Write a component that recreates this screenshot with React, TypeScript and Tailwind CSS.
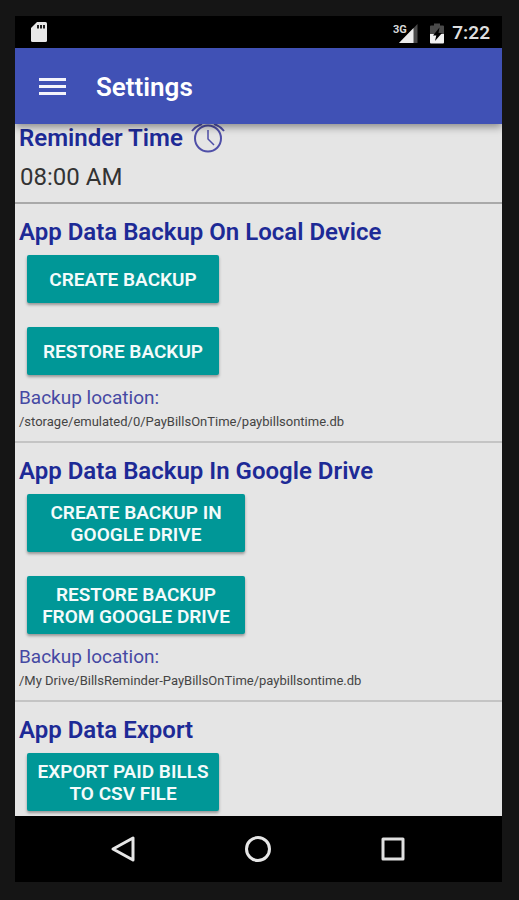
import type { ReactNode } from 'react';

interface BackupSectionProps {
  title: string;
  location?: string;
  children: ReactNode;
}

interface ActionButtonProps {
  wide?: boolean;
  children: ReactNode;
}

function SdCardIcon() {
  return (
    <svg viewBox="0 0 16 20" className="h-5 w-4" aria-hidden="true">
      <path d="M6 0h8.500q1.500 0 1.500 1.500v17q0 1.500-1.500 1.500h-13Q0 20 0 18.500V6z" fill="#e8e8e8" />
      <path d="M6 3h2v3.500H6zM9 3h2v3.500H9zM12 3h2v3.500h-2z" fill="#222" />
    </svg>
  );
}

function SignalIcon() {
  return (
    <svg viewBox="0 0 25 21" className="h-[21px] w-[25px]" role="img" aria-label="3G signal">
      <path d="M24.500 1v19H6z" fill="#4a4a4a" />
      <path d="M20.500 5v15H6z" fill="#ececec" />
      <text x="0" y="10" fontSize="11" fontWeight="700" fill="#d8d8d8" stroke="#000" strokeWidth="2" paintOrder="stroke">
        3G
      </text>
    </svg>
  );
}

function BatteryIcon() {
  return (
    <svg viewBox="0 0 14 21" className="h-[21px] w-3.5" aria-hidden="true">
      <path d="M4 .500h6v2h3q1 0 1 1V11H0V3.500q0-1 1-1h3z" fill="#4a4a4a" />
      <path d="M0 11h14v8.500q0 1-1 1H1q-1 0-1-1z" fill="#f2f2f2" />
      <path d="M9.500 4.500 3 12.500h3.300L5 18l7-8H8.500z" fill="#000" />
    </svg>
  );
}

function AlarmIcon() {
  return (
    <svg viewBox="0 0 34 34" className="-my-1 h-[34px] w-[34px]" fill="none" stroke="#4f4fa8" strokeWidth="2" aria-hidden="true">
      <circle cx="17" cy="17.500" r="13" />
      <path d="M17 9v9l6 6" strokeWidth="1.500" />
      <path d="M1 10Q5 5 11 3M33 10Q29 5 23 3" />
    </svg>
  );
}

function ActionButton({ wide = false, children }: ActionButtonProps) {
  return (
    <button
      type="button"
      className={`min-h-12 rounded-xs bg-[#009797] px-2 pt-2 pb-1.5 text-center text-[19px] leading-[22px] font-semibold text-[#f4fbfb] uppercase shadow-[0_2px_3px_rgba(0,0,0,0.35)] ${
        wide ? 'w-[218px]' : 'w-48'
      }`}
    >
      {children}
    </button>
  );
}

function BackupSection({ title, location, children }: BackupSectionProps) {
  return (
    <section className="border-b-2 border-[#c4c4c4] px-1 pt-3 pb-[9px] last:border-b-0">
      <h2 className="text-[24px] leading-8 font-semibold text-[#1d2a96]">{title}</h2>
      <div className="mt-[7px] flex flex-col items-start gap-6 pl-2">{children}</div>
      {location && (
        <>
          <h3 className="mt-[11px] text-[19px] leading-6 text-[#4549a3]">Backup location:</h3>
          <p className="mt-0.5 text-[13px] leading-5 text-[#444]">{location}</p>
        </>
      )}
    </section>
  );
}

export default function App() {
  return (
    <div className="h-screen bg-[#151515] pt-4 pr-[17px] pb-[18px] pl-[15px] font-['Roboto','Liberation_Sans',sans-serif]">
      <div className="flex h-full flex-col overflow-hidden bg-black">
        <div className="flex h-8 shrink-0 items-center justify-between pr-3 pl-4">
          <SdCardIcon />
          <div className="flex items-center pt-0.5 text-[#dedede]">
            <SignalIcon />
            <span className="ml-3">
              <BatteryIcon />
            </span>
            <span className="ml-2 text-[19px] leading-6 font-semibold">7:22</span>
          </div>
        </div>

        <header className="relative z-10 flex h-[76px] shrink-0 items-center bg-[#4051b5] pl-6 text-white shadow-[0_3px_8px_rgba(0,0,0,0.4)]">
          <button type="button" aria-label="Open menu" className="flex w-[27px] flex-col gap-1">
            <span className="h-[3px] w-full bg-[#f4f4fb]" />
            <span className="h-[3px] w-full bg-[#f4f4fb]" />
            <span className="h-[3px] w-full bg-[#f4f4fb]" />
          </button>
          <h1 className="ml-[30px] pt-0.5 text-[26px] leading-8 font-semibold">Settings</h1>
        </header>

        <main className="min-h-0 flex-1 overflow-hidden bg-[#e5e5e5]">
          <section className="border-b-2 border-[#a9a9a9] px-1 pb-[9px]">
            <h2 className="flex h-7 items-center gap-2 text-[24px] leading-7 font-semibold text-[#1d2a96]">
              Reminder Time
              <AlarmIcon />
            </h2>
            <p className="mt-[9px] pl-px text-[24px] leading-8 text-[#333]">08:00 AM</p>
          </section>

          <BackupSection title="App Data Backup On Local Device" location="/storage/emulated/0/PayBillsOnTime/paybillsontime.db">
            <ActionButton>Create Backup</ActionButton>
            <ActionButton>Restore Backup</ActionButton>
          </BackupSection>

          <BackupSection title="App Data Backup In Google Drive" location="/My Drive/BillsReminder-PayBillsOnTime/paybillsontime.db">
            <ActionButton wide>Create Backup in Google Drive</ActionButton>
            <ActionButton wide>Restore Backup from Google Drive</ActionButton>
          </BackupSection>

          <BackupSection title="App Data Export">
            <ActionButton>Export Paid Bills to CSV File</ActionButton>
          </BackupSection>
        </main>

        <nav className="flex h-[66px] shrink-0 items-center justify-center gap-[107px] pr-0.5">
          <button type="button" aria-label="Back">
            <svg viewBox="0 0 28 28" className="size-7" fill="none" stroke="#e6e6e6" strokeWidth="3" strokeLinejoin="round">
              <path d="M24 3v22L4 14z" />
            </svg>
          </button>
          <button type="button" aria-label="Home">
            <svg viewBox="0 0 28 28" className="size-7" fill="none" stroke="#e6e6e6" strokeWidth="3">
              <circle cx="14" cy="14" r="11.500" />
            </svg>
          </button>
          <button type="button" aria-label="Recent apps">
            <svg viewBox="0 0 28 28" className="size-7" fill="none" stroke="#e0e0e0" strokeWidth="3" strokeLinejoin="round">
              <path d="M4 4h20v20H4z" />
            </svg>
          </button>
        </nav>
      </div>
    </div>
  );
}
